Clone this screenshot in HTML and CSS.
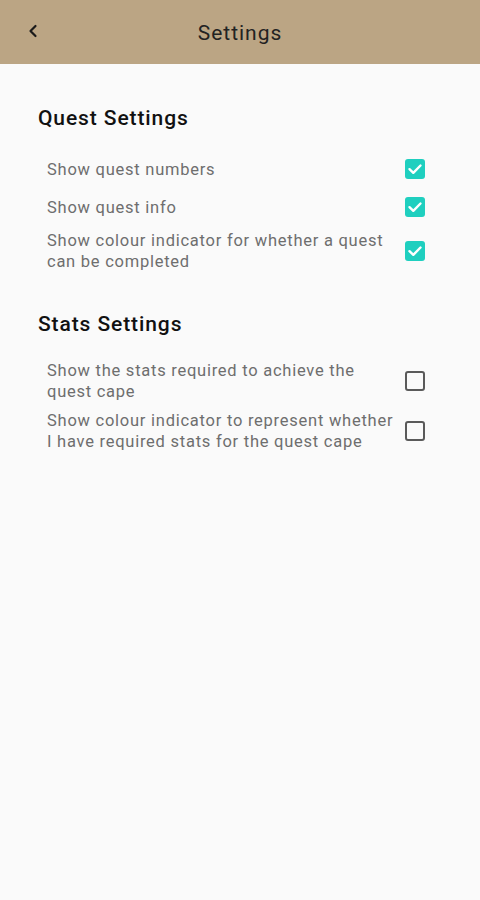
FILE: index.html
```html
<!DOCTYPE html>
<html>
<head>
<meta charset="utf-8">
<link rel="stylesheet" href="styles.css">
</head>
<body>
<header class="appbar">
  <button class="back" aria-label="Back">
    <svg width="12" height="14" viewBox="0 0 12 14"><path d="M8.5 2 L3.5 7 L8.5 12" fill="none" stroke="#1a1a1a" stroke-width="2.2" stroke-linecap="round" stroke-linejoin="round"/></svg>
  </button>
  <h1 class="title">Settings</h1>
</header>
<main class="content">
  <section class="group">
    <h2 class="group-title">Quest Settings</h2>
    <div class="row"><span class="label">Show quest numbers</span><span class="check on"><svg viewBox="0 0 20 20"><path d="M4.5 10.2 L8.3 13.8 L15.5 6.5" fill="none" stroke="#fff" stroke-width="2.4" stroke-linecap="round" stroke-linejoin="round"/></svg></span></div>
    <div class="row"><span class="label">Show quest info</span><span class="check on"><svg viewBox="0 0 20 20"><path d="M4.5 10.2 L8.3 13.8 L15.5 6.5" fill="none" stroke="#fff" stroke-width="2.4" stroke-linecap="round" stroke-linejoin="round"/></svg></span></div>
    <div class="row"><span class="label">Show colour indicator for whether a quest can be completed</span><span class="check on"><svg viewBox="0 0 20 20"><path d="M4.5 10.2 L8.3 13.8 L15.5 6.5" fill="none" stroke="#fff" stroke-width="2.4" stroke-linecap="round" stroke-linejoin="round"/></svg></span></div>
  </section>
  <section class="group">
    <h2 class="group-title">Stats Settings</h2>
    <div class="row"><span class="label">Show the stats required to achieve the quest cape</span><span class="check"></span></div>
    <div class="row"><span class="label">Show colour indicator to represent whether I have required stats for the quest cape</span><span class="check"></span></div>
  </section>
</main>
</body>
</html>
```
FILE: styles.css
```css
* { box-sizing: border-box; }
html, body { margin: 0; padding: 0; }
body {
  width: 480px;
  height: 900px;
  background: #fafafa;
  font-family: Roboto, "Noto Sans", sans-serif;
}
.appbar {
  height: 64px;
  background: #bba584;
  display: flex;
  align-items: center;
  justify-content: center;
  position: relative;
}
.back {
  position: absolute;
  left: 24px;
  top: 22px;
  width: 18px;
  height: 18px;
  padding: 0;
  border: 0;
  background: none;
  display: flex;
  align-items: center;
  justify-content: center;
}
.title {
  margin: 0;
  font-size: 21px;
  font-weight: 400;
  color: #222;
  letter-spacing: 1px;
  padding-top: 2px;
}
.content {
  padding: 40px 55px 0 38px;
}
.group { margin-bottom: 34px; }
.group-title {
  margin: 0 0 18px 0;
  font-size: 21px;
  font-weight: 500;
  color: #111;
  line-height: 28px;
  letter-spacing: 0.9px;
}
.row {
  display: flex;
  align-items: center;
  justify-content: space-between;
  padding-left: 9px;
  min-height: 38px;
}
.label {
  font-size: 16.5px;
  line-height: 21px;
  color: #6e6e6e;
  letter-spacing: 0.75px;
  max-width: 348px;
  padding: 4px 0;
}
.check {
  width: 20px;
  height: 20px;
  border: 2px solid #5a5a5a;
  border-radius: 3px;
  flex: none;
  display: flex;
}
.check.on {
  background: #1fcfbf;
  border: 0;
}
.check.on svg { width: 100%; height: 100%; }
```
